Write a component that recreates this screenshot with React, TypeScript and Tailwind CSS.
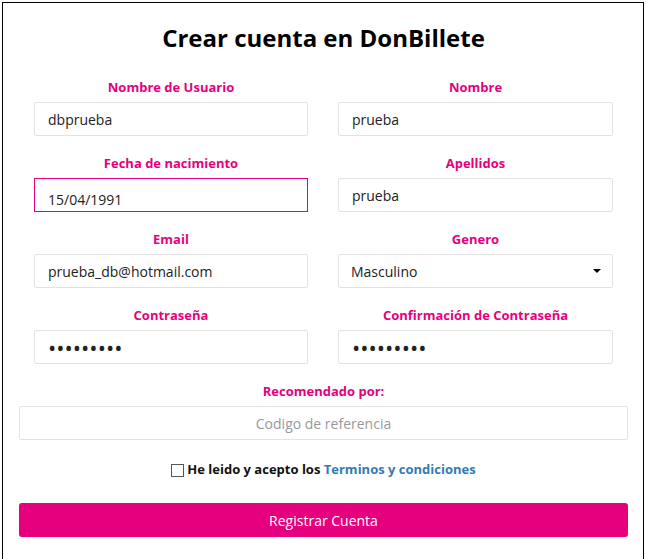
import { useState } from "react";

const pink = "text-[#e6007e]";

function Field({ label, children }: { label: string; children: React.ReactNode }) {
  return (
    <div className="flex flex-col">
      <label className={`h-[18px] leading-[18px] mb-[6px] text-center text-[13px] font-bold ${pink}`}>{label}</label>
      {children}
    </div>
  );
}

const inputCls =
  "h-[34px] w-full rounded-[2px] border border-[#e3e3e3] bg-white px-[13px] text-[14px] text-[#222] outline-none";

export default function App() {
  const [accepted, setAccepted] = useState(false);
  const [genero, setGenero] = useState("Masculino");

  return (
    <div className="min-h-[559px] bg-white pl-[2px] pr-[2px] pt-[2px] font-['Open_Sans',sans-serif]">
      <div className="border border-black border-b-0 min-h-[557px] pl-[16px] pr-[15px]">
        <h1 className="mt-[19px] mb-[24px] h-[32px] leading-[32px] text-center text-[24px] font-bold text-black">
          Crear cuenta en DonBillete
        </h1>

        {/* Campos en dos columnas */}
        <div className="grid grid-cols-[274px_275px] gap-x-[30px] gap-y-[18px] px-[15px]">
          <Field label="Nombre de Usuario">
            <input className={inputCls} defaultValue="dbprueba" />
          </Field>
          <Field label="Nombre">
            <input className={inputCls} defaultValue="prueba" />
          </Field>
          <Field label="Fecha de nacimiento">
            <div className="h-[34px] w-full border border-[#e6007e] bg-white px-[13px] pt-[11px] text-[14px] leading-[20px] text-[#222]">
              15/04/1991
            </div>
          </Field>
          <Field label="Apellidos">
            <input className={inputCls} defaultValue="prueba" />
          </Field>
          <Field label="Email">
            <input className={inputCls} defaultValue="prueba_db@hotmail.com" />
          </Field>
          <Field label="Genero">
            <div className="relative">
              <select
                value={genero}
                onChange={(e) => setGenero(e.target.value)}
                className={`${inputCls} appearance-none pl-[12px]`}
              >
                <option>Masculino</option>
                <option>Femenino</option>
              </select>
              <span className="pointer-events-none absolute right-[12px] top-[15px] h-0 w-0 border-x-[4px] border-t-[4px] border-x-transparent border-t-black" />
            </div>
          </Field>
          <Field label="Contraseña">
            <input type="password" className={`${inputCls} text-[22px]`} defaultValue="prueba123" />
          </Field>
          <Field label="Confirmación de Contraseña">
            <input type="password" className={`${inputCls} text-[22px]`} defaultValue="prueba123" />
          </Field>
        </div>

        <div className="mt-[18px] flex flex-col">
          <label className={`h-[18px] leading-[18px] mb-[6px] text-center text-[13px] font-bold ${pink}`}>
            Recomendado por:
          </label>
          <input
            className={`${inputCls} text-center placeholder:text-[#999]`}
            placeholder="Codigo de referencia"
          />
        </div>

        <div className="mt-[20px] flex h-[20px] items-center justify-center text-[13px] font-bold text-[#111]">
          <input
            type="checkbox"
            checked={accepted}
            onChange={() => setAccepted(!accepted)}
            className="mr-[3px] h-[13px] w-[13px] appearance-none border border-[#555] bg-white checked:bg-[#e6007e]"
          />
          He leido y acepto los&nbsp;
          <a className="text-[#337ab7]" href="#">Terminos y condiciones</a>
        </div>

        <button className="mt-[23px] h-[34px] w-full rounded-[3px] bg-[#e6007e] text-[14px] text-white">
          Registrar Cuenta
        </button>
      </div>
    </div>
  );
}
